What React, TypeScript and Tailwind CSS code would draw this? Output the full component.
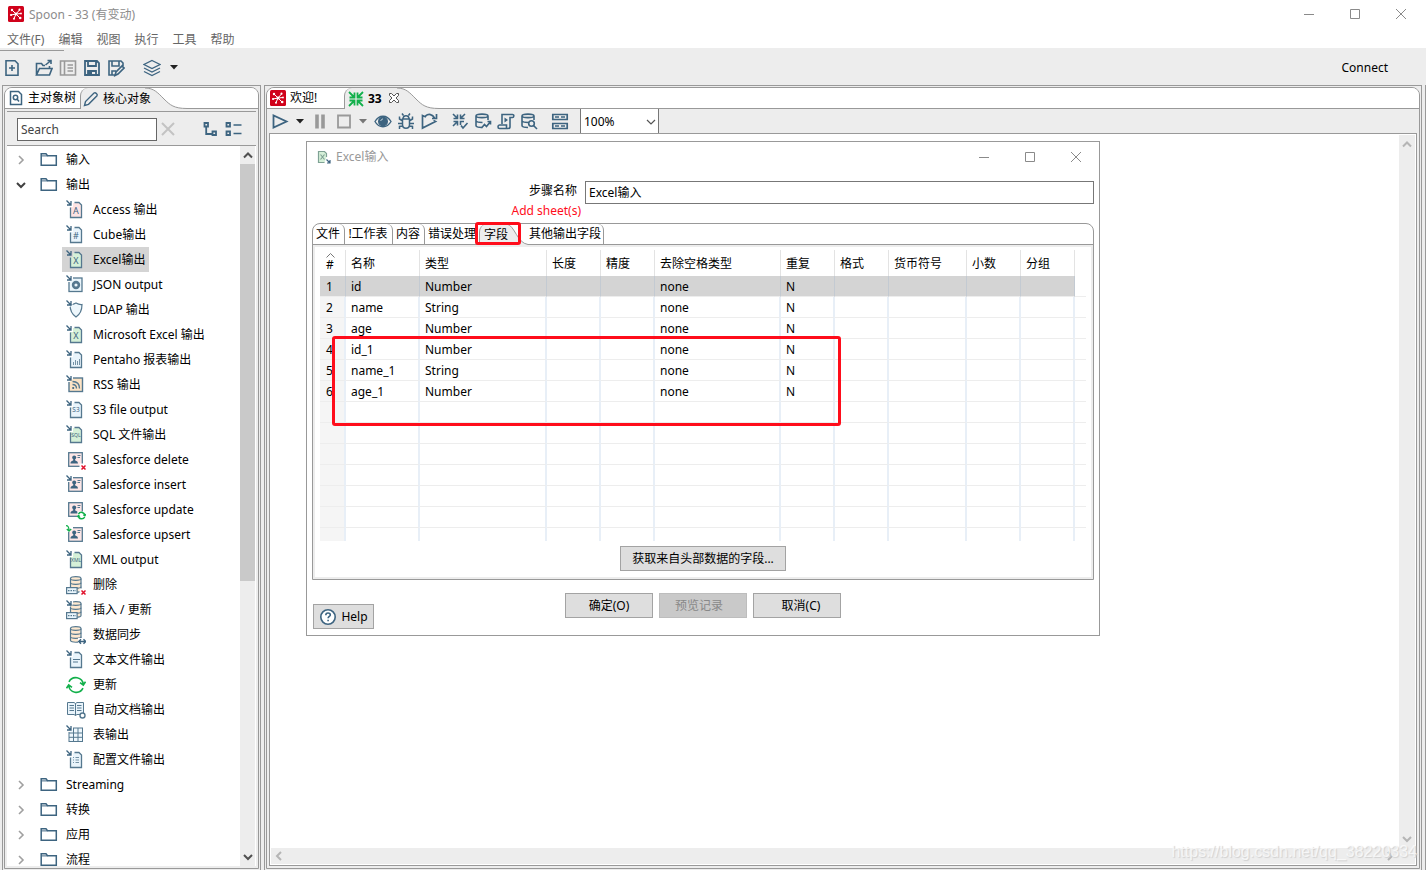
import type { ReactNode } from "react";

const INK = "#3d6480";
const SOFT = "#55788f";
const LINE = "#999999";

function Glyph({ size = 18, children, stroke = INK, width = 1.6 }: { size?: number; children: ReactNode; stroke?: string; width?: number }) {
  return (
    <svg width={size} height={size} viewBox={`0 0 ${size} ${size}`} fill="none" stroke={stroke} strokeWidth={width} className="shrink-0" aria-hidden="true">
      {children}
    </svg>
  );
}

function Logo() {
  return (
    <Glyph size={16} stroke="#fff" width={1}>
      <rect width="16" height="16" rx="1.500" fill="#d0021b" stroke="none" />
      <path d="M8 8 4 4M8 8l3.500-4M8 8l-5 1M8 8l-2 4.500M8 8l4 4M8 8l5-.5" />
      <g fill="#fff" stroke="none">
        <circle cx="4" cy="4" r="1.200" />
        <circle cx="11.500" cy="3.700" r="1.100" />
        <circle cx="3" cy="9" r="1.100" />
        <circle cx="6" cy="12.700" r="1" />
        <circle cx="12.200" cy="12" r="1.300" />
        <circle cx="13" cy="7.500" r=".9" />
        <circle cx="8" cy="8" r="1.400" />
      </g>
    </Glyph>
  );
}

function Caret({ color = "#222" }: { color?: string }) {
  return (
    <svg width="8" height="5" viewBox="0 0 8 5" className="shrink-0" aria-hidden="true">
      <path d="M0 0h8L4 4.500z" fill={color} />
    </svg>
  );
}

function Chevron({ dir, color = "#a0a0a0", bold = 2 }: { dir: "up" | "down" | "left" | "right"; color?: string; bold?: number }) {
  const d = {
    up: "M1 7.500 5 3.500 9 7.500",
    down: "M1 3 5 7 9 3",
    left: "M7 1 3 5 7 9",
    right: "M3 1 7 5 3 9",
  }[dir];
  return (
    <svg width="10" height="10" viewBox="0 0 10 10" fill="none" stroke={color} strokeWidth={bold} className="shrink-0" aria-hidden="true">
      <path d={d} />
    </svg>
  );
}

function Swoosh() {
  return (
    <svg width="42" height="21" viewBox="0 0 42 21" fill="none" className="shrink-0" aria-hidden="true">
      <path d="M0 0C9 0 13 5 19 11C25 17 29 20.500 42 20.500V21H0z" fill="#ededed" />
      <path d="M0 0C9 0 13 5 19 11C25 17 29 20.500 42 20.500" stroke={LINE} />
    </svg>
  );
}

function Folder() {
  return (
    <Glyph size={18} width={1.5}>
      <path d="M1.200 2.800h4.800l1.500 2h8.800v9.400H1.200z" />
      <path d="M1.500 4.900h6" strokeWidth="1" />
    </Glyph>
  );
}

const Arrow = () => <path d="M.5 .5 4.200 4.200M5 1v4H1" strokeWidth="1.300" stroke={INK} />;

function Doc({ fill, label, children }: { fill: string; label?: string; children?: ReactNode }) {
  return (
    <Glyph size={20} width={1.3} stroke={SOFT}>
      <path d="M4 7h3V3h6l2 2.500V17H4z" fill={fill} stroke="none" />
      <path d="M4.500 7.500V17.500H15.500V5L13 2.500H8.500" />
      <Arrow />
      {label && (
        <text x="10" y={label.length > 1 ? 12 : 14} textAnchor="middle" fontSize={label.length > 2 ? 5 : label.length > 1 ? 6.5 : 9} fill={INK} stroke="none">
          {label}
        </text>
      )}
      {children}
    </Glyph>
  );
}

function Person({ children }: { children?: ReactNode }) {
  return (
    <Glyph size={20} width={1.3} stroke={SOFT}>
      <rect x="2.700" y="2.700" width="13.600" height="13.600" fill="#fde6e6" />
      <circle cx="8.200" cy="7.500" r="2" fill={INK} stroke="none" />
      <path d="M4.500 13.500c0-2.500 2-2.500 2.800-3.200V8h1.800v2.300c.8.700 2.900.7 2.900 3.200z" fill={INK} stroke="none" />
      <path d="M11.500 5.500h3M11.500 7.500h2.500" strokeWidth="1" />
      {children}
    </Glyph>
  );
}

const CornerArrow = () => (
  <>
    <path d="M0 0h7v4.500H4.500V7H0z" fill="#fff" stroke="none" />
    <Arrow />
  </>
);

const RedX = () => (
  <>
    <path d="M13.500 13.500h6.500v6.500h-6.500z" fill="#fff" stroke="none" />
    <path d="m15.500 15.500 4 4m0-4-4 4" stroke="#e0102a" strokeWidth="1.500" />
  </>
);

function Db({ row = false, children }: { row?: boolean; children?: ReactNode }) {
  return (
    <Glyph size={20} width={1.2} stroke={SOFT}>
      <path d="M4.500 3.500c0-2.500 10.500-2.500 10.500 0v12c0 2.300-10.500 2.300-10.500 0z" fill="#fde8cf" />
      <path d="M4.500 3.800c0 2 10.500 2 10.500 0M4.500 7.800c0 2 10.500 2 10.500 0M4.500 11.800c0 2 10.500 2 10.500 0" />
      {row && (
        <>
          <rect x=".6" y="12.600" width="10.500" height="6" fill="#e9f5fc" />
          <path d="M2 15.600h8" strokeDasharray="1.500 1" />
        </>
      )}
      {children}
    </Glyph>
  );
}

const Refresh = ({ x = 0, y = 0, s = 1, w = 1.8 }: { x?: number; y?: number; s?: number; w?: number }) => (
  <g transform={`translate(${x} ${y}) scale(${s})`} stroke="#12b04b" strokeWidth={w}>
    <path d="M3 6.800A7.600 7.600 0 0 1 17.300 9.500M14 7.600l3.300 2.400 2.200-3.300" />
    <path d="M17 13.200A7.600 7.600 0 0 1 2.700 10.500M6 12.400 2.700 10 .5 13.300" />
  </g>
);

const steps: { label: string; icon: ReactNode; selected?: boolean }[] = [
  { label: "Access 输出", icon: <Doc fill="#fde3e3" label="A" /> },
  { label: "Cube输出", icon: <Doc fill="#e9f4fb" label="#" /> },
  { label: "Excel输出", icon: <Doc fill="#d5f0d8" label="X" />, selected: true },
  {
    label: "JSON output",
    icon: (
      <Glyph size={20} width={1.3} stroke={SOFT}>
        <rect x="3" y="3" width="13" height="13.500" fill="#eaf5fb" />
        <circle cx="10" cy="10" r="2.900" strokeWidth="2.600" />
        <CornerArrow />
      </Glyph>
    ),
  },
  {
    label: "LDAP 输出",
    icon: (
      <Glyph size={20} width={1.2} stroke={SOFT}>
        <path d="M10 3c2 1.200 4 1.700 6 1.500 0 6-1.500 9.500-6 12.500-4.500-3-6-6.500-6-12.500 2 .2 4-.3 6-1.500z" fill="#eef7fc" />
        <CornerArrow />
      </Glyph>
    ),
  },
  { label: "Microsoft Excel 输出", icon: <Doc fill="#d5f0d8" label="X" /> },
  { label: "Pentaho 报表输出", icon: <Doc fill="#e9f4fb"><path d="M7.500 15v-3M9.500 15v-5M11.500 15v-4M13.500 15V9" strokeWidth=".8" /></Doc> },
  {
    label: "RSS 输出",
    icon: (
      <Glyph size={20} width={1.4} stroke={SOFT}>
        <rect x="3" y="3" width="13.500" height="13.500" fill="#fde3c4" />
        <path d="M6.500 6.500c4.500 0 7 2.500 7 7M6.500 9.500c2.500 0 4 1.500 4 4" />
        <circle cx="7.200" cy="13" r="1.100" fill={INK} stroke="none" />
        <CornerArrow />
      </Glyph>
    ),
  },
  { label: "S3 file output", icon: <Doc fill="#e9f4fb" label="S3" /> },
  { label: "SQL 文件输出", icon: <Doc fill="#d5f0d8" label="SQL" /> },
  { label: "Salesforce delete", icon: <Person><RedX /></Person> },
  { label: "Salesforce insert", icon: <Person><CornerArrow /></Person> },
  { label: "Salesforce update", icon: <Person><path d="M11.500 11.500h8.500v8.500h-8.500z" fill="#fff" stroke="none" /><Refresh x={11.2} y={11.2} s={0.44} w={3.4} /></Person> },
  {
    label: "Salesforce upsert",
    icon: (
      <Person>
        <path d="M0 0h7v4.500H4.500V7H0z" fill="#fff" stroke="none" />
        <path d="M0 .7c2 0 3 1 3 5M.8 4 3 6.200 5.200 4" stroke="#12b04b" strokeWidth="1.300" />
      </Person>
    ),
  },
  { label: "XML output", icon: <Doc fill="#d5f0d8" label="XML" /> },
  { label: "删除", icon: <Db row><RedX /></Db> },
  { label: "插入 / 更新", icon: <Db row><CornerArrow /></Db> },
  {
    label: "数据同步",
    icon: (
      <Db>
        <path d="M12 13h8v6h-8z" fill="#fff" stroke="none" />
        <path d="M13 16.500h6.500M15 14.200l-2.300 2.300 2.300 2.300M17.500 14.200l2.300 2.300-2.300 2.300" strokeWidth="1.400" stroke={INK} />
      </Db>
    ),
  },
  { label: "文本文件输出", icon: <Doc fill="#e9f4fb"><path d="M7 9.500h7M7 12h5" strokeWidth="1" /></Doc> },
  { label: "更新", icon: <Glyph size={20}><Refresh w={1.6} /></Glyph> },
  {
    label: "自动文档输出",
    icon: (
      <Glyph size={20} width={1} stroke={SOFT}>
        <path d="M1.500 2.500h6.500l1.500 1 1.500-1h6.500v12H11l-1.500 1-1.500-1H1.500z" fill="#e9f4fb" />
        <path d="M9.500 3.500v12M3.500 5.500H8M3.500 8H8M3.500 10.500H8M11 5.500h4.500M11 8h4.500M11 10.500h4.500" />
        <circle cx="16.500" cy="15.500" r="2.500" fill="#fff" strokeWidth="1.400" />
      </Glyph>
    ),
  },
  {
    label: "表输出",
    icon: (
      <Glyph size={20} width={1} stroke={SOFT}>
        <rect x="3" y="3" width="13.500" height="13.500" fill="#eef7fc" />
        <path d="M3 8h13.500M3 12.300h13.500M7.500 3v13.500M12 3v13.500" />
        <CornerArrow />
      </Glyph>
    ),
  },
  { label: "配置文件输出", icon: <Doc fill="#e9f4fb"><path d="M7 7.500h1M9.500 7.500H13M7 10h1M9.500 10H13M7 12.500h1M9.500 12.500H13" strokeWidth=".8" /></Doc> },
];

function FolderRow({ label, open = false }: { label: string; open?: boolean }) {
  return (
    <li className="flex h-[25px] items-center pl-[9px]">
      <Chevron dir={open ? "down" : "right"} color={open ? "#404040" : "#a0a0a0"} bold={open ? 2 : 1.6} />
      <span className="ml-[14px] flex items-center gap-2">
        <Folder />
        {label}
      </span>
    </li>
  );
}

function Sidebar() {
  return (
    <aside className="flex w-[259px] shrink-0 flex-col border-x border-t border-[#999] px-px pt-px pb-px">
      <div className="flex min-h-0 flex-1 flex-col overflow-hidden rounded-t-lg border border-[#999]">
        <div className="flex h-[21px] bg-white" role="tablist">
          <button role="tab" aria-selected={false} className="flex w-[75px] shrink-0 items-center gap-[3px] overflow-hidden border-b border-[#999] pl-[2px] whitespace-nowrap">
            <Glyph size={18} width={1.5}>
              <path d="M3.500 2.500h8l3 3v10h-11z" />
              <circle cx="8.500" cy="8.500" r="2.200" />
              <path d="m10 10 2 2.500" />
            </Glyph>
            主对象树
          </button>
          <button role="tab" aria-selected={true} className="flex w-[65px] shrink-0 items-center gap-1 rounded-tl-lg border-l border-[#999] bg-[#ededed] pl-[2px] whitespace-nowrap">
            <Glyph size={16} width={1.4}>
              <path d="m1.500 14.500 1-4L11 2c1.500-1 4 1.200 3 2.800l-8.500 8.500z" />
            </Glyph>
            <span className="relative">核心对象</span>
          </button>
          <Swoosh />
          <div className="flex-1 border-b border-[#999]" />
        </div>
        <div className="mx-[2px] mt-[2px] flex h-[35px] items-center border-y border-[#999] pt-px pl-[10px]">
          <input aria-label="Search" placeholder="Search" className="h-[23px] w-[140px] border border-[#666] bg-white px-[3px] placeholder:text-[#444]" />
          <button aria-label="Clear search" className="ml-[3px]">
            <Glyph size={16} stroke="#c3c3c3" width={2}><path d="m2 2 12 12M14 2 2 14" /></Glyph>
          </button>
          <button aria-label="Expand all" className="ml-[26px]">
            <Glyph size={17} width={1.8}><path d="M2.500 2h3.500v3.500H2.500zM4.200 5.500v7.500h6.300M10.500 10.500h3.500v3.500h-3.500z" /></Glyph>
          </button>
          <button aria-label="Collapse all" className="ml-[6px]">
            <Glyph size={17} width={1.8}><path d="M1.500 2h3.500v3.500H1.500zM1.500 10.500h3.500v3.500H1.500z" /><path d="M8.500 4h8M8.500 12.500h8" strokeWidth="1.300" /></Glyph>
          </button>
        </div>
        <div className="mx-[2px] mb-[2px] flex min-h-0 flex-1 bg-white">
          <ul className="min-w-0 flex-1 overflow-hidden pt-px">
            <FolderRow label="输入" />
            <FolderRow label="输出" open />
            {steps.map((s) => (
              <li key={s.label} className="flex h-[25px] pl-[55px]">
                <span className={`flex items-center gap-[7px] pr-1 pl-1 whitespace-nowrap ${s.selected ? "bg-[#d4d4d4]" : ""}`}>
                  {s.icon}
                  {s.label}
                </span>
              </li>
            ))}
            {["Streaming", "转换", "应用", "流程"].map((f) => (
              <FolderRow key={f} label={f} />
            ))}
          </ul>
          <div className="mr-px flex w-[15px] shrink-0 flex-col items-center bg-[#ededed]">
            <div className="flex h-[18px] items-center"><Chevron dir="up" color="#505050" /></div>
            <div className="h-[417px] w-full bg-[#c9c9c9]" />
            <div className="flex-1" />
            <div className="flex h-[18px] items-center"><Chevron dir="down" color="#505050" /></div>
          </div>
        </div>
      </div>
    </aside>
  );
}

function Minimise() {
  return <Glyph size={12} stroke="#8a8a8a" width={1}><path d="M1 6.500h10" /></Glyph>;
}
function Maximise() {
  return <Glyph size={12} stroke="#8a8a8a" width={1}><path d="M1.500 1.500h9v9h-9z" /></Glyph>;
}
function Close() {
  return <Glyph size={12} stroke="#8a8a8a" width={1}><path d="m1 1 10 10M11 1 1 11" /></Glyph>;
}

function WindowButtons() {
  return (
    <div className="flex items-center gap-[34px]">
      <button aria-label="Minimise"><Minimise /></button>
      <button aria-label="Maximise"><Maximise /></button>
      <button aria-label="Close"><Close /></button>
    </div>
  );
}

const columns = ["名称", "类型", "长度", "精度", "去除空格类型", "重复", "格式", "货币符号", "小数", "分组"];
const widths = [26, 74, 127, 54, 54, 126, 54, 54, 78, 54, 54];
const fields = [
  ["id", "Number"],
  ["name", "String"],
  ["age", "Number"],
  ["id_1", "Number"],
  ["name_1", "String"],
  ["age_1", "Number"],
];

function FieldTable() {
  return (
    <div className="relative">
      <table className="w-full table-fixed border-separate border-spacing-0 text-left">
        <colgroup>
          {widths.map((w, i) => (
            <col key={i} style={{ width: w }} />
          ))}
          <col />
        </colgroup>
        <thead>
          <tr className="h-[26px]">
            <th className="border-r border-[#e3e3e3] p-0 align-top font-normal">
              <span className="flex w-[20px] flex-col items-center pt-[3px]">
                <svg width="9" height="5" viewBox="0 0 9 5" fill="none" stroke="#777" aria-hidden="true"><path d="m.5 4.500 4-4 4 4" /></svg>
                <span className="leading-[14px]">#</span>
              </span>
            </th>
            {columns.map((c) => (
              <th key={c} className="border-r border-[#e3e3e3] p-0 pt-px pl-[5px] font-normal whitespace-nowrap">{c}</th>
            ))}
            <th className="p-0" />
          </tr>
        </thead>
        <tbody>
          {Array.from({ length: 13 }, (_, r) => {
            const f = fields[r];
            const cells = f ? [f[0], f[1], "", "", "none", "N", "", "", "", ""] : columns.map(() => "");
            const sel = r === 0;
            const last = r === 12;
            const edge = sel ? "border-r border-b border-r-[#c3cad2] border-b-[#ededed] bg-[#d4d4d4]" : last ? "border-r-2 border-r-[#e8eff7]" : "border-r-2 border-b border-r-[#e8eff7] border-b-[#ededed]";
            return (
              <tr key={r} className={last ? "h-[13px]" : "h-[21px]"}>
                <td className={`p-0 pt-px pl-[6px] leading-[12px] ${edge} ${sel ? "" : "bg-[#f5f5f5]"}`}>{f ? r + 1 : ""}</td>
                {cells.map((c, i) => (
                  <td key={i} className={`p-0 pt-px pl-[5px] leading-[12px] ${edge}`}>{c}</td>
                ))}
                <td className={last ? "p-0" : "border-b border-[#ededed] p-0"} />
              </tr>
            );
          })}
        </tbody>
      </table>
      <div className="pointer-events-none absolute top-[86px] left-[12px] h-[90px] w-[509px] rounded-[3px] border-3 border-[#ff0d1b]" />
    </div>
  );
}

const pushButton = "flex h-[25px] items-center justify-center border border-[#a3a3a3] bg-[#dedede] whitespace-nowrap";
const dialogTab = "flex shrink-0 items-center justify-center rounded-tr-md border-r border-b border-[#999] pr-px whitespace-nowrap";

function Dialog() {
  return (
    <section aria-label="Excel输入" className="mt-[6px] ml-[35px] w-[794px] shrink-0 self-start border border-[#999] bg-white">
      <header className="flex h-[29px] items-center pr-[17px] pl-[9px] text-[#999]">
        <Glyph size={16} stroke="#7fa295" width={1.2}>
          <path d="M10.500 8V4.500L8.500 2.500h-6v11h6" fill="#d5f0d8" />
          <path d="m4.500 5.500 4 5M8.500 5.500l-4 5" />
          <path d="m10.500 10.500 3 3M14 11v3h-3" stroke={INK} />
        </Glyph>
        <span className="ml-1 flex-1">Excel输入</span>
        <WindowButtons />
      </header>
      <div className="mt-[10px] flex h-[23px] items-center pr-[5px]">
        <label htmlFor="step" className="w-[278px] pr-2 pb-1 text-right">步骤名称</label>
        <input id="step" defaultValue="Excel输入" className="h-full min-w-0 flex-1 border border-[#777] px-[3px] pb-px" />
      </div>
      <p className="mb-1 h-[15px] w-[274px] text-right leading-[14px] text-[#ff0d1b]">Add sheet(s)</p>
      <div className="mx-[5px] rounded-t-lg border border-[#999]">
        <div className="flex h-[21px]" role="tablist">
          <button role="tab" className={`${dialogTab} w-[32px]`}>文件</button>
          <button role="tab" className={`${dialogTab} w-[48px]`}>!工作表</button>
          <button role="tab" className={`${dialogTab} w-[32px]`}>内容</button>
          <button role="tab" className="flex w-[54px] shrink-0 items-center border-b border-[#999] pl-[3px] whitespace-nowrap">错误处理</button>
          <button role="tab" aria-selected={true} className="relative flex w-[28px] shrink-0 items-center rounded-tl-lg border-l border-[#999] bg-[#ededed] pl-1 whitespace-nowrap">
            <span className="z-10">字段</span>
            <span className="pointer-events-none absolute -top-[2px] -left-[5px] z-10 h-[23px] w-[46px] rounded-[3px] border-3 border-[#ff0d1b]" />
          </button>
          <svg width="21" height="21" viewBox="0 0 21 21" fill="none" className="shrink-0" aria-hidden="true">
            <path d="M0 0C8 2 10 19 21 20.500V21H0z" fill="#ededed" />
            <path d="M0 0C8 2 10 19 21 20.500" stroke={LINE} />
          </svg>
          <button role="tab" className={`${dialogTab} w-[76px]`}>其他输出字段</button>
          <div className="flex-1 border-b border-[#999]" />
        </div>
        <div className="border-2 border-[#ededed] px-[5px] pt-[3px] pb-[6px]">
          <FieldTable />
          <button className={`${pushButton} mx-auto mt-[5px] w-[166px]`}>获取来自头部数据的字段...</button>
        </div>
      </div>
      <footer className="mt-[13px] grid grid-cols-[1fr_auto_1fr] pb-[6px]">
        <button className={`${pushButton} mt-[11px] ml-[6px] w-[61px] gap-1`}>
          <Glyph size={18} width={1.6}>
            <circle cx="9" cy="9" r="7.200" fill="#fff" />
            <path d="M6.800 7.200c0-3 4.500-2.700 4.500-.3 0 1.500-2.200 1.700-2.200 3.400M9.100 11.800v1.500" />
          </Glyph>
          Help
        </button>
        <div className="flex gap-[6px]">
          <button className={`${pushButton} w-[88px]`}>确定(O)</button>
          <button disabled className="flex h-[25px] w-[88px] items-center justify-center border border-[#bdbdbd] bg-[#c9c9c9] pr-2 text-[#888]">预览记录</button>
          <button className={`${pushButton} w-[88px] pl-2`}>取消(C)</button>
        </div>
      </footer>
    </section>
  );
}

const DbShape = () => <path d="M14 8V4c0-2.500-12-2.500-12 0v9.500c0 1.300 2.500 2 6 2M2 4c0 2.200 12 2.200 12 0M2 8.500c0 1.500 3 2 6.500 2" />;

function Toolbar() {
  return (
    <div className="flex h-[24px] shrink-0 items-center pl-[4px]" role="toolbar">
      <button aria-label="Run"><Glyph size={18} width={1.8}><path d="M2.500 3.500v12l13-6z" /></Glyph></button>
      <button aria-label="Run options" className="ml-[7px]"><Caret /></button>
      <button aria-label="Pause" className="ml-[7px]"><Glyph size={18} stroke="#999" width={3.6}><path d="M6 2.500v14M12 2.500v14" /></Glyph></button>
      <button aria-label="Stop" className="ml-[6px]"><Glyph size={18} stroke="#999" width={1.8}><path d="M3 3.500h12v12H3z" /></Glyph></button>
      <button aria-label="Stop options" className="ml-[6px]"><Caret color="#777" /></button>
      <button aria-label="Preview" className="ml-[7px]">
        <Glyph size={18} width={1.4}><path d="M1 9.500c4-7 12-7 16 0-4 7-12 7-16 0z" /><circle cx="9" cy="9.500" r="4.300" fill={INK} /><path d="M6.800 9C7 7.700 8 7 9 7" stroke="#cfdde6" strokeWidth="1" /></Glyph>
      </button>
      <button aria-label="Debug" className="ml-[5px]">
        <Glyph size={18} width={1.5}><path d="M5.500 7h7v5.500c0 5-7 5-7 0zM6 7c0-4.500 6-4.500 6 0M6.500 3.500 5 1.500M11.500 3.500 13 1.500M5 8.500 2.500 7V4.500M13 8.500l2.500-1.500V4.500M5 11.500H1M13 11.500h4M5.500 14l-3 .5V17M12.500 14l3 .5V17" /></Glyph>
      </button>
      <button aria-label="Replay" className="ml-[5px]">
        <Glyph size={18} width={1.7}><path d="M6 5 2.500 3.500v12.500l13-6.500-2-1M5.500 4c3-2.500 7-2 9 2M16.500 2v4.500H12" /></Glyph>
      </button>
      <button aria-label="Verify" className="ml-[13px]">
        <Glyph size={18} width={1.6}><path d="m2 2 4 4M6.500 2.500v4h-4M14 2l-4 4M9.500 2.500v4h4M2 14l4-4M6.500 13.500v-4h-4M9.500 13v-3.500H13M10 13.500l2 2.500 4.500-5" /></Glyph>
      </button>
      <button aria-label="Impact" className="ml-[5px]">
        <Glyph size={18} width={1.6}><DbShape /><path d="m7.500 16 3-3.500 2 2 4-5M13.500 9.500h3v3" /></Glyph>
      </button>
      <button aria-label="SQL" className="ml-[5px]">
        <Glyph size={18} width={1.6}><path d="M5 12V2.500h10.500c2 0 1.500 3 0 3H13V15c0 1.500-1 1.500-2 1.500H2.500c-2 0-2-3.500 0-3.500h7v3" /><path d="M7.500 5.500v5l3.500-2.500z" fill={INK} stroke="none" /></Glyph>
      </button>
      <button aria-label="Explore database" className="ml-[5px]">
        <Glyph size={18} width={1.6}><DbShape /><circle cx="11.500" cy="11.500" r="2.800" /><path d="m13.500 13.500 3.500 3.500" /></Glyph>
      </button>
      <button aria-label="Show results" className="ml-[13px]">
        <Glyph size={18} width={1.7}><path d="M1.800 2.500h14.400v5H1.800zM1.800 11.500h14.400v5H1.800z" /><path d="M4 5h4M10 5h4M4 14h4M10 14h4" /></Glyph>
      </button>
      <div className="relative ml-[11px] h-full w-[79px]">
        <select aria-label="Zoom" className="h-full w-full appearance-none border-x border-[#777] bg-white pt-px pl-[3px]">
          <option>100%</option>
        </select>
        <span className="pointer-events-none absolute top-[8px] right-[3px]"><Chevron dir="down" color="#555" bold={1.2} /></span>
      </div>
    </div>
  );
}

function Editor() {
  return (
    <main className="mr-[2px] ml-[3px] flex min-w-0 flex-1 flex-col border-x border-t border-[#999] px-px pt-px pb-px">
      <div className="flex min-h-0 flex-1 flex-col overflow-hidden rounded-t-lg border border-[#999]">
        <div className="flex h-[21px] shrink-0 bg-white" role="tablist">
          <button role="tab" className="flex w-[77px] shrink-0 items-center gap-1 border-b border-[#999] pl-[3px]">
            <Logo />
            欢迎!
          </button>
          <button role="tab" aria-selected={true} className="flex w-[53px] shrink-0 items-center gap-1 rounded-tl-lg border-l border-[#999] bg-[#ededed] pl-[3px] font-bold whitespace-nowrap">
            <Glyph size={16} stroke="#12b04b" width={1.8}>
              <path d="m1 1 5 5M6.500 1.500v5h-5M15 1l-5 5M9.500 1.500v5h5M1 15l5-5M6.500 14.500v-5h-5M15 15l-5-5M9.500 14.500v-5h5" />
            </Glyph>
            33
          </button>
          <div className="relative">
            <Swoosh />
            <button aria-label="Close tab" className="absolute top-[4px] -left-[9px]">
              <Glyph size={12} stroke="#555" width={1}><path d="M1.500 1.500h2L6 4l2.500-2.500h2v2L8 6l2.500 2.500v2h-2L6 8l-2.500 2.500h-2v-2L4 6 1.500 3.500z" fill="#fff" /></Glyph>
            </button>
          </div>
          <div className="flex-1 border-b border-[#999]" />
        </div>
        <Toolbar />
        <div className="mr-[2px] mb-[2px] ml-[2px] flex min-h-0 flex-1 flex-col border border-[#999] bg-white p-px">
          <div className="flex min-h-0 flex-1">
            <div className="flex min-w-0 flex-1 overflow-hidden">
              <Dialog />
            </div>
            <div className="flex w-[16px] shrink-0 flex-col items-center justify-between bg-[#ededed] py-1">
              <Chevron dir="up" color="#b5b5b5" />
              <Chevron dir="down" color="#b5b5b5" />
            </div>
          </div>
          <div className="flex h-[16px] shrink-0 items-center justify-between bg-[#ededed] pr-[20px] pl-[3px]">
            <Chevron dir="left" color="#b5b5b5" />
            <Chevron dir="right" color="#b5b5b5" />
          </div>
        </div>
      </div>
    </main>
  );
}

export default function App() {
  return (
    <div className="relative flex h-screen flex-col overflow-hidden bg-[#ededed] font-['Noto_Sans','Noto_Sans_CJK_SC',sans-serif] text-[12px] leading-[16px] text-black">
      <header className="flex h-[28px] shrink-0 items-center bg-white pr-[19px] pl-[8px] text-[#8c8c8c]">
        <Logo />
        <h1 className="ml-[5px] flex-1 pt-px text-[12px]">Spoon - 33 (有变动)</h1>
        <WindowButtons />
      </header>
      <nav className="flex h-[20px] shrink-0 items-center gap-[14px] bg-white pt-[3px] pl-[7px] text-[#666]">
        {["文件(F)", "编辑", "视图", "执行", "工具", "帮助"].map((m) => (
          <button key={m} className="whitespace-nowrap">{m}</button>
        ))}
      </nav>
      <div className="flex h-[37px] shrink-0 flex-col pt-[2px]">
        <div className="h-px w-[64px] bg-[#999]" />
        <div className="flex flex-1 items-center pr-[38px] pb-px pl-[3px]" role="toolbar">
          <button aria-label="New"><Glyph><path d="M3 1.800h9l3 3v11.400H3zM9 6v6M6 9h6" /></Glyph></button>
          <button aria-label="Open" className="ml-[14px]"><Glyph><path d="M1.500 16V4.500h5L8 6.500h2M1.500 16h13l2.500-6.500H4.500zM14.500 9V7M10.500 6l5.500-4.500M12.500 1.500H16V5" /></Glyph></button>
          <button aria-label="Explore" className="ml-[6px]"><Glyph stroke="#999"><path d="M1.500 2h15v14h-15zM5.500 2v14M8.500 6h5.500M8.500 9h5.500M8.500 12h5.500" /></Glyph></button>
          <button aria-label="Save" className="ml-[6px]"><Glyph width={1.8}><path d="M2 2h12l2 2v12H2zM5 2v5h8V2M5 16v-4h8v4" /><path d="M5 12h4v4H5z" fill={INK} stroke="none" /></Glyph></button>
          <button aria-label="Save as" className="ml-[6px]"><Glyph><path d="M8 16H2V2h12l2 2v3M5 2v5h7V2M5 16v-4h4M8 16.500l1-3.500 6-6 2 2-6 6z" /></Glyph></button>
          <button aria-label="Perspective" className="ml-[18px]"><Glyph width={1.3}><path d="m9 1.500 8 4-8 4-8-4zM1 9l8 4 8-4M1 12.500l8 4 8-4" /></Glyph></button>
          <button aria-label="Perspective options" className="ml-[9px]"><Caret /></button>
          <button className="ml-auto">Connect</button>
        </div>
      </div>
      <div className="flex min-h-0 flex-1 border-r border-[#999] pr-px pl-[2px]">
        <Sidebar />
        <Editor />
      </div>
      <p className="pointer-events-none absolute right-[9px] bottom-[8px] font-['Liberation_Sans',sans-serif] text-[16px] leading-[20px] text-white/70 [text-shadow:1px_1px_1px_#d0d0d0]">
        https://blog.csdn.net/qq_38220334
      </p>
    </div>
  );
}
